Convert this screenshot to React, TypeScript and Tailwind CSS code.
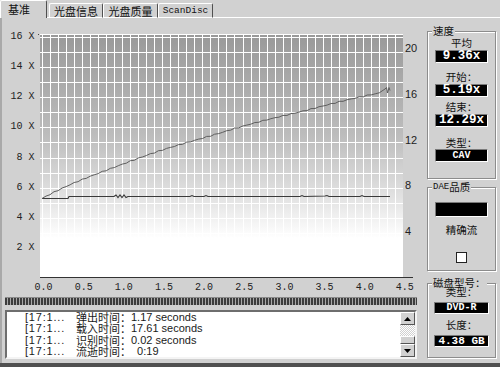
import React from "react";

function Chart() {
  const X = (u: number) => 42 + 80.3 * u;
  const Y = (v: number) => 277 - 15.125 * v;
  const vLines: number[] = [];
  for (let k = 0; k <= 45; k++) {
    const x = Math.round(42 + 8.02 * k) + 0.5;
    if (x < 403) vLines.push(x);
  }
  const hLines: number[] = [];
  for (let k = 0; k < 16; k++) hLines.push(Math.round(36.7 + 15.1 * k) + 0.5);

  const sp: string[] = [];
  for (let i = 0; i <= 84; i++) {
    const u = i * 0.05;
    let v = Math.sqrt(26.94 + 28.86 * u);
    if (i > 0) v += 0.035 * Math.sin(u * 53) + 0.02 * Math.sin(u * 131);
    sp.push(`${X(u).toFixed(1)},${Y(v).toFixed(1)}`);
  }
  const speedD =
    "M" +
    sp.join(" L") +
    ` L385,89 L386.5,87.5 L387.5,93 L389,87.5 L390,90.5`;

  const flatD =
    "M42,198.5 L68,198.5 L69,196.5 L114,196.5 L116,195 L118,197.5 L120,195 L122,197.5 L124,195 L126,197.5 L128,196.5 L190,196.5 L192,195.5 L194,196.5 L204,196.5 L206,195.5 L208,196.5 L300,196.5 L302,195.5 L304,196.5 L325,196 L327,195.5 L329,196.5 L360,196.5 L362,195.5 L364,196.5 L390,196.5";

  const left = [16, 14, 12, 10, 8, 6, 4, 2];
  const right = [20, 16, 12, 8, 4];
  const xs = [0, 0.5, 1, 1.5, 2, 2.5, 3, 3.5, 4, 4.5];

  return (
    <svg width={418} height={279} viewBox="2 18 418 279" className="block shrink-0">
      <defs>
        <linearGradient id="plotbg" gradientUnits="userSpaceOnUse" x1="0" y1="34" x2="0" y2="238">
          <stop offset="0" stopColor="#999999" />
          <stop offset="0.5" stopColor="#bdbdbd" />
          <stop offset="0.8" stopColor="#e2e2e2" />
          <stop offset="1" stopColor="#ffffff" />
        </linearGradient>
      </defs>
      <rect x={40} y={34} width={363} height={243} fill="url(#plotbg)" />
      <g stroke="#ffffff" strokeWidth={1} shapeRendering="crispEdges">
        {vLines.map((x) => (
          <line key={"v" + x} x1={x} y1={34} x2={x} y2={277} />
        ))}
        {hLines.map((y) => (
          <line key={"h" + y} x1={40} y1={y} x2={403} y2={y} />
        ))}
        <line x1={40} y1={34.5} x2={403} y2={34.5} />
      </g>
      <path d={flatD} fill="none" stroke="#3a3a3a" strokeWidth={1.1} />
      <path d={speedD} fill="none" stroke="#5e5e5e" strokeWidth={1} />
      <line x1={40} y1={277.5} x2={413} y2={277.5} stroke="#333" strokeWidth={1} shapeRendering="crispEdges" />
      <rect x={38} y={34} width={1} height={1} fill="#444" />
      <g fontFamily="'Liberation Mono', monospace" fontSize={10} fill="#222">
        {left.map((v) => (
          <text key={"l" + v} x={34.5} y={Y(v) + 3.5} textAnchor="end">
            {v} X
          </text>
        ))}
        {xs.map((u) => (
          <text key={"x" + u} x={43.5 + 80.3 * u} y={290} textAnchor="middle">
            {u.toFixed(1)}
          </text>
        ))}
      </g>
      <g fontFamily="'Liberation Sans', sans-serif" fontSize={11} fill="#222">
        {right.map((v) => (
          <text key={"r" + v} x={405} y={277 - 11.44 * v + 4}>
            {v}
          </text>
        ))}
      </g>
    </svg>
  );
}

function VBox({ children, cls }: { children: React.ReactNode; cls: string }) {
  return (
    <div
      className={`bg-black text-white font-['Liberation_Mono',monospace] font-bold flex items-center justify-center leading-none border border-t-[#7a7a7a] border-l-[#7a7a7a] border-r-white border-b-white ${cls}`}
    >
      {children}
    </div>
  );
}

function Label({ children, cls }: { children: React.ReactNode; cls: string }) {
  return (
    <div className={`text-[10.5px] leading-[12px] h-[12px] text-[#111] font-['Noto_Sans_CJK_SC',sans-serif] ${cls}`}>
      {children}
    </div>
  );
}

function Tab({ children, cls }: { children: React.ReactNode; cls: string }) {
  return (
    <div
      className={`h-[15px] border-l border-t border-r border-b border-l-white border-t-white border-r-[#505050] border-b-white rounded-tl-[2px] rounded-tr-[2px] flex items-center justify-center pt-[1px] ${cls}`}
    >
      {children}
    </div>
  );
}

function Arrow({ up }: { up: boolean }) {
  return (
    <svg width={7} height={4} viewBox="0 0 7 4">
      {up ? <polygon points="0,4 7,4 3.5,0" fill="#000" /> : <polygon points="0,0 7,0 3.5,4" fill="#000" />}
    </svg>
  );
}

const rows: [string, string, string][] = [
  ["[17:1...", "弹出时间：", "1.17 seconds"],
  ["[17:1...", "载入时间：", "17.61 seconds"],
  ["[17:1...", "识别时间：", "0.02 seconds"],
  ["[17:1...", "流逝时间：", "  0:19"],
];

export default function App() {
  return (
    <div className="w-[500px] h-[367px] bg-[#d1d1d1] flex flex-col overflow-hidden text-[#111] font-['Liberation_Sans','Noto_Sans_CJK_SC',sans-serif]">
      {/* tabs */}
      <div className="h-[18px] flex items-end shrink-0">
        <div className="h-[18px] w-[47px] border-l border-t border-r border-l-white border-t-white border-r-[#505050] rounded-tl-[2px] rounded-tr-[2px] flex items-center pl-[7px] pb-[1px] text-[11px] leading-none font-['Noto_Sans_CJK_SC',sans-serif]">
          基准
        </div>
        <div className="w-[2px] h-full border-b border-white" />
        <Tab cls="w-[54px] text-[11px] leading-none font-['Noto_Sans_CJK_SC',sans-serif]">光盘信息</Tab>
        <Tab cls="w-[55px] text-[11px] leading-none font-['Noto_Sans_CJK_SC',sans-serif]">光盘质量</Tab>
        <Tab cls="w-[55px] text-[9.5px] leading-none font-['Liberation_Mono',monospace]">ScanDisc</Tab>
        <div className="flex-1 h-full border-b border-white" />
      </div>

      {/* body */}
      <div className="flex-1 flex border-l-2 border-[#a9a9a9] min-h-0">
        {/* left column */}
        <div className="w-[418px] flex flex-col shrink-0">
          <Chart />
          <div className="ml-[3px] w-[412px] h-[8px] border-t border-[#8a8a8a] bg-[repeating-linear-gradient(90deg,#3c3c3c_0px,#3c3c3c_2px,#a8a8a8_2px,#a8a8a8_3px)]" />
          <div className="mt-[5px] ml-[3px] w-[412px] h-[49px] bg-white border-2 border-t-[#6e6e6e] border-l-[#6e6e6e] border-r-[#f4f4f4] border-b-[#f4f4f4] flex">
            <div className="flex-1 flex flex-col pt-[0px] text-[#1a1a1a]">
              {rows.map((r, i) => (
                <div key={i} className="h-[12px] flex items-center whitespace-pre">
                  <span className="w-[69px] pl-[18px] text-[11px] tracking-[0.8px] leading-none font-['Liberation_Sans',sans-serif]">
                    {r[0]}
                  </span>
                  <span className="text-[11px] leading-none font-['Noto_Sans_CJK_SC',sans-serif]">{r[1]}</span>
                  <span className="text-[11px] leading-none font-['Liberation_Sans',sans-serif]">{r[2]}</span>
                </div>
              ))}
            </div>
            <div className="w-[15px] flex flex-col">
              <div className="h-[13px] bg-[#d1d1d1] border border-t-white border-l-white border-r-[#555] border-b-[#555] flex items-center justify-center">
                <Arrow up />
              </div>
              <div className="h-[11px] bg-[repeating-conic-gradient(#ffffff_0_25%,#d1d1d1_0_50%)] bg-[length:2px_2px]" />
              <div className="h-[8px] bg-[#d1d1d1] border border-t-white border-l-white border-r-[#555] border-b-[#555]" />
              <div className="h-[13px] bg-[#d1d1d1] border border-t-white border-l-white border-r-[#555] border-b-[#555] flex items-center justify-center">
                <Arrow up={false} />
              </div>
            </div>
          </div>
        </div>

        {/* right column */}
        <div className="flex-1 flex flex-col pl-[7px]">
          {/* speed */}
          <div className="relative mt-[13px] w-[69px] h-[148px] border border-[#8c8c8c] shadow-[inset_1px_1px_0_#ffffff,1px_1px_0_#ffffff] flex flex-col items-center">
            <span className="absolute -top-[7px] left-[4px] px-[1px] bg-[#d1d1d1] text-[10.5px] leading-[12px] font-['Noto_Sans_CJK_SC',sans-serif]">
              速度
            </span>
            <Label cls="mt-[5px]">平均</Label>
            <VBox cls="mt-[1px] w-[53px] h-[13px] text-[12.5px]">9.36x</VBox>
            <Label cls="mt-[8px]">开始：</Label>
            <VBox cls="mt-[1px] w-[53px] h-[13px] text-[12.5px]">5.19x</VBox>
            <Label cls="mt-[4px]">结束：</Label>
            <VBox cls="mt-[1px] w-[53px] h-[13px] text-[12.5px]">12.29x</VBox>
            <Label cls="mt-[10px]">类型：</Label>
            <VBox cls="w-[53px] h-[13px] text-[10px]">CAV</VBox>
          </div>

          {/* DAE */}
          <div className="relative mt-[8px] w-[69px] h-[84px] border border-[#8c8c8c] shadow-[inset_1px_1px_0_#ffffff,1px_1px_0_#ffffff] flex flex-col items-center">
            <span className="absolute -top-[7px] left-[4px] px-[1px] bg-[#d1d1d1] text-[10.5px] leading-[12px] flex items-center">
              <span className="text-[9px] font-['Liberation_Mono',monospace]">DAE</span>
              <span className="font-['Noto_Sans_CJK_SC',sans-serif]">品质</span>
            </span>
            <div className="mt-[14px] w-[53px] h-[15px] bg-black border border-t-[#7a7a7a] border-l-[#7a7a7a] border-r-white border-b-white" />
            <Label cls="mt-[7px]">精确流</Label>
            <div className="mt-[16px] w-[11px] h-[11px] bg-white border border-[#222]" />
          </div>

          {/* disc type */}
          <div className="relative mt-[12px] w-[69px] h-[75px] border border-[#8c8c8c] shadow-[inset_1px_1px_0_#ffffff,1px_1px_0_#ffffff] flex flex-col items-center">
            <span className="absolute -top-[7px] left-[4px] px-[1px] bg-[#d1d1d1] text-[10.5px] leading-[12px] font-['Noto_Sans_CJK_SC',sans-serif]">
              磁盘型号：
            </span>
            <Label cls="mt-[2px] relative">类型：</Label>
            <VBox cls="mt-[4px] w-[55px] h-[12px] text-[10px]">DVD-R</VBox>
            <Label cls="mt-[5px]">长度：</Label>
            <VBox cls="mt-[4px] w-[55px] h-[12px] text-[11px]">4.38 GB</VBox>
          </div>
        </div>
      </div>

      <div className="h-[4px] bg-[#505050] shrink-0" />
    </div>
  );
}
